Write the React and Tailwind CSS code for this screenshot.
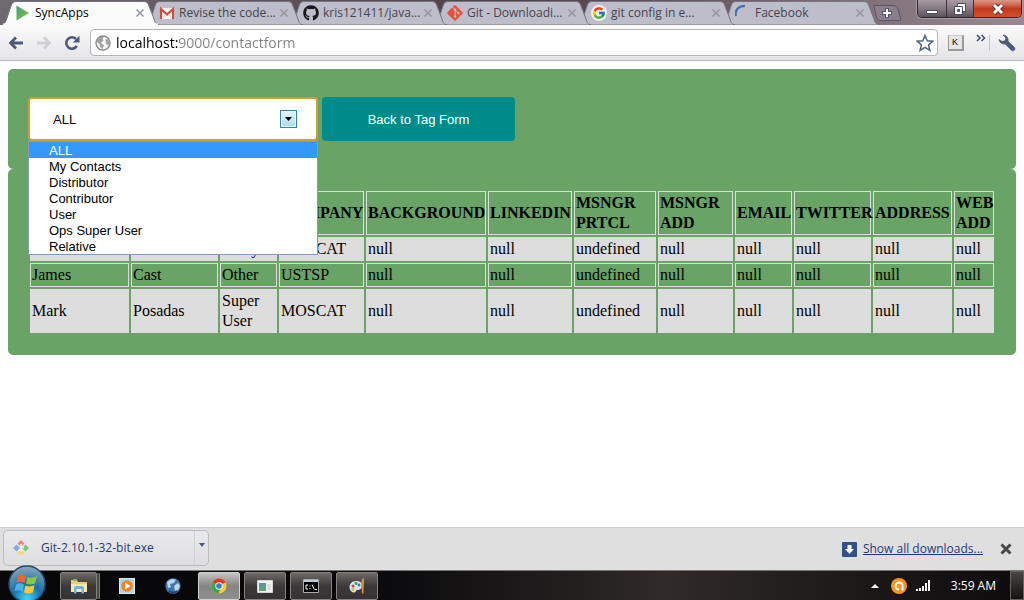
import React, { useState } from "react";
import { FaGithub, FaGitAlt } from "react-icons/fa";
import { FcGoogle } from "react-icons/fc";

const PlayIcon = () => (
  <svg viewBox="0 0 16 16" className="size-4">
    <defs>
      <linearGradient id="play" x1="0" y1="0" x2="1" y2="1">
        <stop offset="0" stopColor="#3da07c" />
        <stop offset="1" stopColor="#8cc63f" />
      </linearGradient>
    </defs>
    <path d="M1.5 .5 14 8 1.5 15.5Z" fill="url(#play)" />
  </svg>
);

const MailIcon = () => (
  <svg viewBox="0 0 16 16" className="size-4">
    <path d="M1 3h14v11H1z" fill="#f3f3f3" />
    <path d="M2 14V4l6 5.5L14 4v10" fill="none" stroke="#d54b3d" strokeWidth="2.2" />
    <path d="M3.5 13.5 6.5 9M12.5 13.5 9.5 9" stroke="#d5d5d5" strokeWidth=".8" />
  </svg>
);

const GoogleIcon = () => (
  <span className="flex size-4 items-center justify-center rounded-full bg-[#f1f1f3]">
    <FcGoogle className="size-[14px]" />
  </span>
);

const SpinnerIcon = () => (
  <svg viewBox="0 0 16 16" className="size-4">
    <path d="M.8 11A8 8 0 0 1 10 1.2" fill="none" stroke="#3f72b5" strokeWidth="2.2" />
  </svg>
);

const tabs = [
  { title: "SyncApps", icon: <PlayIcon />, z: "z-[6]" },
  { title: "Revise the code...", icon: <MailIcon />, z: "z-[5]" },
  { title: "kris121411/java...", icon: <FaGithub className="size-4 text-[#191717]" />, z: "z-[4]" },
  { title: "Git - Downloadi...", icon: <FaGitAlt className="size-[18px] text-[#e8513a]" />, z: "z-[3]" },
  { title: "git config in e...", icon: <GoogleIcon />, z: "z-[2]" },
  { title: "Facebook", icon: <SpinnerIcon />, z: "z-[1]" },
];

function Tab({ tab, active }) {
  return (
    <div className={"relative -mr-[13px] h-[25px] w-[157px] shrink-0 " + tab.z}>
      <svg viewBox="0 0 157 25" preserveAspectRatio="none" className="absolute inset-0 size-full" aria-hidden="true">
        <path
          d="M0 25C3 24 4 21 5 18L9 6C10 3 11 1.500 14 1.500H142C145 1.500 146 3 147 6L152 19C153 23 154 24 157 25Z"
          fill={active ? "#fbfbfc" : "#bdbec9"}
          stroke="#77747f"
          strokeWidth="1"
        />
        {active && <path d="M1 24.500H156" stroke="#fbfbfc" strokeWidth="2" />}
      </svg>
      <div className="relative flex h-full items-center pr-[14px] pl-[13px]">
        <button role="tab" aria-selected={active} className="flex min-w-0 flex-1 items-center gap-1 text-left whitespace-nowrap">
          <span className="flex w-4 shrink-0 items-center justify-center">{tab.icon}</span>
          <span className={"text-[12px] leading-4 " + (active ? "text-black" : "text-[#45454d]")}>{tab.title}</span>
        </button>
        <button aria-label={"Close " + tab.title} className="shrink-0">
          <svg viewBox="0 0 10 10" className="size-[10px]">
            <path d="M1.500 1.500 8.500 8.500M8.500 1.500 1.500 8.500" stroke="#96969e" strokeWidth="1.500" />
          </svg>
        </button>
      </div>
    </div>
  );
}

function TabStrip() {
  return (
    <header className="flex h-[25px] items-start overflow-hidden bg-linear-to-r from-[#6f6a70] via-[#4b4148] to-[#9a8893] pl-[2px]">
      <div role="tablist" className="flex">
        {tabs.map((t, i) => (
          <Tab key={t.title} tab={t} active={i === 0} />
        ))}
      </div>
      <button aria-label="New tab" className="mt-[5px] ml-[7px]">
        <svg viewBox="0 0 28 16" className="h-4 w-7">
          <path d="M1 .5H20C23 .5 24 2 25 4L27.500 13C28 15 27 15.500 25.500 15.500H7C5 15.500 4 14 3 11Z" fill="#8b7f8d" stroke="#5d545f" />
          <path d="M14 3v10M9 8h10" stroke="#48587d" strokeWidth="4" />
          <path d="M14 4v8M10 8h8" stroke="#fff" strokeWidth="2" />
        </svg>
      </button>
      <div className="mr-[2px] ml-auto flex h-[18px] overflow-hidden rounded-b-[5px] border border-t-0 border-[#2d282d] shadow-[0_0_0_1px_#a79ba4]">
        <button aria-label="Minimize" className="flex w-[29px] items-center justify-center border-r border-[#383138] bg-linear-to-b from-[#a79ca5] via-[#867983] to-[#5c515a]">
          <svg viewBox="0 0 14 14" className="size-[14px]">
            <path d="M1.500 8.500h11v3h-11z" fill="#fff" stroke="#474e62" />
          </svg>
        </button>
        <button aria-label="Restore" className="flex w-[27px] items-center justify-center border-r border-[#383138] bg-linear-to-b from-[#a79ca5] via-[#867983] to-[#5c515a]">
          <svg viewBox="0 0 14 14" className="size-[14px]">
            <path d="M4.500 1.500h8v8h-8z" fill="#fff" stroke="#474e62" />
            <path d="M1.500 4.500h8v8h-8z" fill="#fff" stroke="#474e62" />
            <path d="M4.500 7.500h2v2h-2z" fill="#777" stroke="#474e62" />
          </svg>
        </button>
        <button aria-label="Close window" className="flex w-[47px] items-center justify-center bg-linear-to-b from-[#dc9a8b] via-[#c23a1f] to-[#d1502c]">
          <svg viewBox="0 0 14 14" className="size-[14px]">
            <path d="M3 3 11 11M11 3 3 11" stroke="#4f3a42" strokeWidth="5" />
            <path d="M3 3 11 11M11 3 3 11" stroke="#fff" strokeWidth="3" />
          </svg>
        </button>
      </div>
    </header>
  );
}

function Toolbar() {
  return (
    <nav className="flex h-9 items-center border-b border-[#b6b6bd] bg-linear-to-b from-[#fbfbfc] to-[#e4e4e6] px-2">
      <button aria-label="Back">
        <svg viewBox="0 0 16 16" className="size-4">
          <path d="M15 8H3M8 2.500 2.500 8 8 13.500" fill="none" stroke="#4c5a78" strokeWidth="2.800" />
        </svg>
      </button>
      <button aria-label="Forward" className="ml-3">
        <svg viewBox="0 0 16 16" className="size-4">
          <path d="M1 8h12M8 2.500 13.500 8 8 13.500" fill="none" stroke="#cfd0d4" strokeWidth="2.800" />
        </svg>
      </button>
      <button aria-label="Reload" className="ml-3">
        <svg viewBox="0 0 16 16" className="size-4">
          <path d="M12.800 11A5.700 5.700 0 1 1 12 4" fill="none" stroke="#4c5a78" strokeWidth="2.600" />
          <path d="M15.500 .8V7.500H8.800Z" fill="#4c5a78" />
        </svg>
      </button>
      <div className="ml-[10px] flex h-[27px] min-w-0 flex-1 items-center gap-[5px] rounded-[4px] border border-[#b4b4ba] bg-white pr-[3px] pl-1">
        <svg viewBox="0 0 16 16" className="size-4 shrink-0" aria-hidden="true">
          <circle cx="8" cy="8" r="7" fill="#f4f4f4" stroke="#8a8a8a" strokeWidth="1.400" />
          <path d="M2 4.500 5 2l4-.3L7.500 4 8.500 5.500 6 7.500 7 9 9 10 7.500 14 5 11.500 4.500 9 2 7ZM10.500 4 13 4.500 14.500 7.500 13 10.500 11 8.500Z" fill="#a3a3a3" />
        </svg>
        <input
          type="text"
          aria-label="Address"
          defaultValue="localhost:9000/contactform"
          className="min-w-0 flex-1 bg-[linear-gradient(to_right,#000_63px,#808080_63px)] bg-clip-text text-[14px] leading-5 text-transparent caret-black outline-none"
        />
        <button aria-label="Bookmark this page">
          <svg viewBox="0 0 18 18" className="size-[18px]">
            <path d="M9 1.500 11.200 6.800 16.800 7.200 12.500 10.900 13.900 16.400 9 13.400 4.100 16.400 5.500 10.900 1.200 7.200 6.800 6.800Z" fill="#fff" stroke="#4f6083" strokeWidth="1.500" />
          </svg>
        </button>
      </div>
      <button aria-label="Keyboard extension" className="ml-[10px] flex size-4 items-start border border-r-2 border-b-2 border-[#9a9a9a] border-t-[#ccc] bg-[#e6e6e6] pl-[3px] font-['Liberation_Sans',sans-serif] text-[9px] leading-[13px] text-black">K</button>
      <button aria-label="More extensions" className="mb-[10px] ml-3">
        <svg viewBox="0 0 10 8" className="h-2 w-[10px]">
          <path d="M1 1 4 4 1 7M5.500 1 8.500 4 5.500 7" fill="none" stroke="#3f4b66" strokeWidth="1.500" />
        </svg>
      </button>
      <span className="ml-[3px] h-4 w-px bg-[#c6c6ca]" />
      <button aria-label="Settings" className="ml-2">
        <svg viewBox="0 0 18 18" className="size-[18px]">
          <path d="M1 5.500C1.500 8.500 4 10.500 7 9.800L13.200 16C14 17 15.400 17 16.300 16.200 17.200 15.300 17 14 16.200 13.200L10 7.200C10.600 4 8.500 1.200 5.200 1L8 4 7 6.800 4 7.500Z" fill="#4c5a78" stroke="#4c5a78" strokeWidth=".8" />
        </svg>
      </button>
    </nav>
  );
}

const categories = ["ALL", "My Contacts", "Distributor", "Contributor", "User", "Ops Super User", "Relative"];

function FilterPanel() {
  const [value, setValue] = useState("ALL");
  return (
    <section className="flex h-[100px] items-start gap-1 rounded-[5px] bg-[#69a366] px-5 pt-7 font-['Liberation_Sans',Arial,sans-serif] text-[13px]">
      <div className="relative w-[290px]">
        <select
          aria-label="Contact category"
          value={value}
          onChange={(e) => setValue(e.target.value)}
          className="h-11 w-full appearance-none rounded-[4px] border-2 border-[#cf9f35] bg-white pt-[2px] pl-[23px] text-black outline-none"
        >
          {categories.map((c) => (
            <option key={c}>{c}</option>
          ))}
        </select>
        <span className="pointer-events-none absolute top-[13px] right-[21px] flex h-[18px] w-[17px] items-center justify-center border border-[#3c7fb1] bg-linear-to-b from-[#e9f6fd] to-[#a8d9f3] shadow-[inset_0_0_0_1px_#f2faff]">
          <svg viewBox="0 0 7 4" className="h-1 w-[7px]">
            <path d="M0 0h7L3.500 4Z" />
          </svg>
        </span>
        <ul role="listbox" aria-label="Contact categories" className="absolute top-11 left-0 z-10 w-full border border-[#7f9db9] bg-white">
          {categories.map((c) => (
            <li
              key={c}
              role="option"
              aria-selected={c === value}
              onClick={() => setValue(c)}
              className={"h-4 pt-px pl-5 leading-4 " + (c === value ? "bg-[#3399ff] text-white" : "text-black")}
            >
              {c}
            </li>
          ))}
        </ul>
      </div>
      <button className="h-11 w-[193px] rounded-[4px] bg-[#008b8b] pt-[2px] text-white">Back to Tag Form</button>
    </section>
  );
}

const columns = [
  ["FIRST NAME", "w-[99px]"],
  ["LAST NAME", "w-[87px]"],
  ["TAG", "w-[57px]"],
  ["COMPANY", "w-[85px]"],
  ["BACKGROUND", "w-[120px]"],
  ["LINKEDIN", "w-[84px]"],
  ["MSNGR PRTCL", "w-[82px]"],
  ["MSNGR ADD", "w-[75px]"],
  ["EMAIL", "w-[57px]"],
  ["TWITTER", "w-[77px]"],
  ["ADDRESS", "w-[79px]"],
  ["WEB ADD", "w-[40px]"],
];
const rest = ["null", "null", "undefined", "null", "null", "null", "null", "null"];
const contacts = [
  ["", "", "Study", "MOSCAT", ...rest],
  ["James", "Cast", "Other", "USTSP", ...rest],
  ["Mark", "Posadas", "Super User", "MOSCAT", ...rest],
];

function ContactsPanel() {
  return (
    <section className="rounded-[5px] bg-[#69a366] p-5">
      <table className="w-full table-fixed border-separate border-spacing-[2px] font-['Liberation_Serif','Times_New_Roman',serif] text-[16px] leading-5 text-black">
        <colgroup>
          {columns.map(([name, width]) => (
            <col key={name} className={width} />
          ))}
        </colgroup>
        <thead>
          <tr>
            {columns.map(([name]) => (
              <th key={name} className="border border-[#ddd] p-px text-left font-bold">{name}</th>
            ))}
          </tr>
        </thead>
        <tbody>
          {contacts.map((row, i) => (
            <tr key={i}>
              {row.map((cell, j) => (
                <td key={j} className={"border border-[#ddd] p-px " + (i % 2 === 0 ? "bg-[#ddd]" : "")}>{cell}</td>
              ))}
            </tr>
          ))}
        </tbody>
      </table>
    </section>
  );
}

function DownloadBar() {
  return (
    <aside className="flex h-[43px] items-center border-t border-[#cfcfcf] bg-[#dfdfdf] pr-3 pl-[3px] text-[12px] text-[#1f3a78]">
      <div className="mb-[2px] flex h-9 w-[206px] rounded-[5px] border border-[#bcbcbc] bg-linear-to-b from-[#eaeaed] to-[#dedee1]">
        <button className="flex flex-1 items-center gap-3 pl-[9px]">
          <svg viewBox="0 0 16 16" className="size-4">
            <path d="M8 0 11.500 3.500 8 7 4.500 3.500Z" fill="#ef8580" />
            <path d="M12.500 4.500 16 8 12.500 11.500 9 8Z" fill="#7dc67c" />
            <path d="M8 9 11.500 12.500 8 16 4.500 12.500Z" fill="#f2d879" />
            <path d="M3.500 4.500 7 8 3.500 11.500 0 8Z" fill="#7ea9ec" />
            <path d="M8 4v8M8 6l3 2" stroke="#f7f7f7" strokeWidth="1.500" />
          </svg>
          Git-2.10.1-32-bit.exe
        </button>
        <button aria-label="Download options" className="flex w-[14px] justify-center border-l border-[#d0d0d3] pt-3">
          <svg viewBox="0 0 6 4" className="h-1 w-[6px]">
            <path d="M0 0h6L3 4Z" fill="#3f5788" />
          </svg>
        </button>
      </div>
      <a href="#downloads" className="ml-auto flex items-center gap-[6px]">
        <svg viewBox="0 0 15 15" className="size-[15px]">
          <rect width="15" height="15" rx="1" fill="#344f85" />
          <path d="M5.500 3h4v4H12l-4.500 5L3 7h2.500Z" fill="#fff" />
        </svg>
        <span className="underline">Show all downloads...</span>
      </a>
      <button aria-label="Close downloads" className="ml-[17px]">
        <svg viewBox="0 0 12 12" className="size-3">
          <path d="M1.500 1.500 10.500 10.500M10.500 1.500 1.500 10.500" stroke="#484848" strokeWidth="3" />
        </svg>
      </button>
    </aside>
  );
}

const FolderIcon = () => (
  <svg viewBox="0 0 18 16" className="h-4 w-[18px]">
    <path d="M1 2h6l1 2h9v10H1Z" fill="#e9ce7c" />
    <path d="M3 1h4v2H3z" fill="#6fbf4c" />
    <path d="M1 6h16v8H1Z" fill="#f8e8ad" />
    <path d="M4 15.500V9.500Q4 8 6 8h6q2 0 2 1.500v6h-2.500V11h-5v4.500Z" fill="#6cb5e3" />
  </svg>
);
const PlayerIcon = () => (
  <svg viewBox="0 0 16 16" className="size-4">
    <rect x=".5" y=".5" width="15" height="15" fill="#a9d4ee" stroke="#d9eefa" />
    <circle cx="8" cy="8" r="5.800" fill="#f5841f" />
    <path d="M6 4.500 11.500 8 6 11.500Z" fill="#fff" />
  </svg>
);
const GlobeIcon = () => (
  <svg viewBox="0 0 16 16" className="size-4">
    <circle cx="8" cy="8" r="7.700" fill="#3f77ad" />
    <path d="M2 4 6 1l5 .5L9 5 5 6 6 9 3 10ZM9 8l4-3 2 3-2 4-3 1Z" fill="#b9d6ea" />
    <path d="M4 13q5 3 8 0" stroke="#1d4a82" strokeWidth="2" fill="none" />
  </svg>
);
const ChromeIcon = () => (
  <svg viewBox="0 0 16 16" className="size-4">
    <circle cx="8" cy="8" r="7.500" fill="#f5cf2f" />
    <path d="M8 8 1.500 4.200A7.500 7.500 0 0 1 14.500 4.200Z" fill="#d93a2b" />
    <path d="M8 8 1.500 4.200A7.500 7.500 0 0 0 7.500 15.500L10 9.500Z" fill="#3fa64a" />
    <circle cx="8" cy="8" r="3.700" fill="#eef3f7" />
    <circle cx="8" cy="8" r="2.800" fill="#397fc7" />
  </svg>
);
const WindowIcon = () => (
  <svg viewBox="0 0 16 14" className="h-[14px] w-4">
    <path d="M.5 1.500h15v12H.5z" fill="#f0f0ee" stroke="#d5d5d5" />
    <path d="M2 4h7v8H2z" fill="#5b94a4" />
    <path d="M2 9 6 6l3 3v3H2z" fill="#5fa17a" />
    <path d="M11 5v6M13 5v6" stroke="#c9c9c9" />
  </svg>
);
const ConsoleIcon = () => (
  <svg viewBox="0 0 16 14" className="h-[14px] w-4">
    <path d="M.5 .5h15v13H.5z" fill="#000" stroke="#aaa" />
    <path d="M1 1h14v2H1z" fill="#b9c7d8" />
    <path d="M5 6H3v4h2M7 6.500v1M7 9v1M9 5.500 11 10M11.500 10.500H14" stroke="#fff" fill="none" />
  </svg>
);
const PaintIcon = () => (
  <svg viewBox="0 0 16 16" className="size-4">
    <path d="M7 3C3 3 .5 6 .5 9S2.500 14.500 5 14.500 6.500 12 8.500 12 13 11 13 7.500 10 3 7 3Z" fill="#d4e6f2" />
    <circle cx="4" cy="8" r="1.500" fill="#d9432e" />
    <circle cx="7" cy="5.500" r="1.400" fill="#3a9e4b" />
    <circle cx="10" cy="7" r="1.400" fill="#3577cc" />
    <circle cx="4" cy="11.500" r="1.400" fill="#e7b32e" />
    <path d="M13 1 15 0v5l-.5 10.500h-1.500L12 5Z" fill="#e08838" />
  </svg>
);

const idle = "border-transparent";
const open = "border-[#85817f] bg-linear-to-b from-[#6d6967] via-[#3c393a] to-[#353233]";
const launchers = [
  ["Explorer", <FolderIcon />, open + " w-[37px] shadow-[3px_0_0_-1px_#4a4747,4px_0_0_-1px_#7b7877]"],
  ["Media Player", <PlayerIcon />, idle + " ml-[5px] w-[42px]"],
  ["Network", <GlobeIcon />, idle + " w-[42px]"],
  ["Chrome", <ChromeIcon />, "w-[42px] border-[#d0d0d0] bg-linear-to-b from-[#c4c4c4] via-[#858585] to-[#8e8e8e]"],
  ["Window", <WindowIcon />, open + " w-[42px]"],
  ["Command Prompt", <ConsoleIcon />, open + " w-[42px]"],
  ["Paint", <PaintIcon />, open + " w-[42px]"],
];

function Taskbar() {
  return (
    <footer className="flex h-[30px] items-center border-t border-[#777] bg-linear-to-r from-[#08080a] from-35% via-[#302a29] via-65% to-[#0d0b0c] text-white">
      <button aria-label="Start" className="relative z-10 -mt-[4px] ml-2 shrink-0">
        <svg viewBox="0 0 38 38" className="size-[38px]">
          <defs>
            <radialGradient id="orb" cx=".5" cy=".9" r=".9">
              <stop offset="0" stopColor="#3fd5fa" />
              <stop offset=".45" stopColor="#1770a8" />
              <stop offset="1" stopColor="#8aa9ba" />
            </radialGradient>
          </defs>
          <circle cx="19" cy="19" r="18" fill="url(#orb)" stroke="#284b65" strokeWidth="1.500" />
          <path d="M10 11Q14 8 18 11L16.500 18Q12.500 15.500 8.500 18Z" fill="#ee6535" />
          <path d="M19.500 12Q24 14 29 11L27 18.500Q22 20.500 18 18.500Z" fill="#8dc63f" />
          <path d="M8 19.500Q12 17 16 19.500L14.500 26.500Q10.500 24 6.500 26.500Z" fill="#4bb0e8" />
          <path d="M17.500 20.500Q22 22.500 26.500 20L25 27.500Q20 29.500 16 27.500Z" fill="#fbc92e" />
        </svg>
      </button>
      <div className="ml-[14px] flex gap-1">
        {launchers.map(([name, icon, style]) => (
          <button key={name} aria-label={name} className={"flex h-7 items-center justify-center rounded-[2px] border " + style}>{icon}</button>
        ))}
      </div>
      <div className="ml-auto flex h-full items-center">
        <button aria-label="Hidden icons">
          <svg viewBox="0 0 8 4" className="h-1 w-2"><path d="M4 0 8 4H0Z" fill="#fff" /></svg>
        </button>
        <button aria-label="Antivirus" className="ml-3">
          <svg viewBox="0 0 16 16" className="size-4">
            <circle cx="8" cy="8" r="8" fill="#f7931e" />
            <path d="M11.500 12.500V8A3.500 3.500 0 1 0 8 11.500" fill="none" stroke="#fff" strokeWidth="2" />
          </svg>
        </button>
        <button aria-label="Network signal" className="ml-[9px]">
          <svg viewBox="0 0 15 11" className="h-[11px] w-[15px]">
            <path d="M0 9h2v2H0zM3 8h2v3H3zM6 6h2v5H6zM9 3h2v8H9zM12 0h2v11h-2z" fill="#fff" />
          </svg>
        </button>
        <time className="ml-5 text-[12px] leading-4">3:59 AM</time>
        <button aria-label="Show desktop" className="ml-[14px] h-full w-[14px] border border-[#65615f] bg-linear-to-b from-[#4a4646] to-[#141212]" />
      </div>
    </footer>
  );
}

export default function App() {
  return (
    <div className="flex min-h-screen flex-col bg-white font-['Open_Sans','Noto_Sans',sans-serif]">
      <TabStrip />
      <Toolbar />
      <main className="flex-1 p-2">
        <FilterPanel />
        <ContactsPanel />
      </main>
      <DownloadBar />
      <Taskbar />
    </div>
  );
}
